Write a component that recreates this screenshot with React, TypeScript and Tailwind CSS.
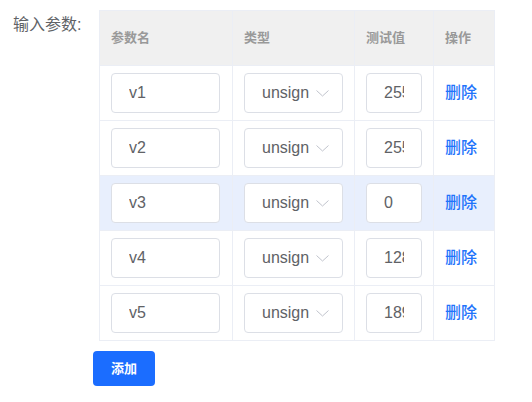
import React from "react";

const rows = [
  { name: "v1", value: "255" },
  { name: "v2", value: "255" },
  { name: "v3", value: "0", active: true },
  { name: "v4", value: "128" },
  { name: "v5", value: "189" },
];

function Chevron() {
  return (
    <svg width="13" height="7" viewBox="0 0 13 7" className="shrink-0">
      <polyline points="0.5,0.5 6.5,6 12.5,0.5" fill="none" stroke="#c0c4cc" strokeWidth="1" />
    </svg>
  );
}

export default function App() {
  const font = { fontFamily: '"Liberation Sans", Arial, "Noto Sans CJK SC", sans-serif' };
  return (
    <div className="w-[532px] h-[402px] bg-white pt-[10px]" style={font}>
      <div className="flex">
        <div className="w-[99px] pl-[13px] mt-[3px] text-[16px] leading-6 text-[#606266]">输入参数:</div>
        <div className="border-l border-t border-[#ebeef5] w-[396px]">
          <div className="grid grid-cols-[133px_122px_79px_61px] bg-[#f0f0f0] h-[55px]">
            <div className="border-r border-b border-[#ebeef5] pl-[11px] flex items-center text-[13px] font-bold text-[#999]">参数名</div>
            <div className="border-r border-b border-[#ebeef5] pl-[11px] flex items-center text-[13px] font-bold text-[#999]">类型</div>
            <div className="border-r border-b border-[#ebeef5] pl-[11px] flex items-center text-[13px] font-bold text-[#999]">测试值</div>
            <div className="border-r border-b border-[#ebeef5] pl-[11px] flex items-center text-[13px] font-bold text-[#999]">操作</div>
          </div>
          {rows.map((r) => (
            <div
              key={r.name}
              className={`grid grid-cols-[133px_122px_79px_61px] h-[55px] ${r.active ? "bg-[#e8effd]" : "bg-white"}`}
            >
              <div className="border-r border-b border-[#ebeef5] pl-[11px] pr-[12px] flex items-center">
                <input
                  readOnly
                  value={r.name}
                  className="w-full h-[40px] border border-[#dcdfe6] rounded-[4px] bg-white px-[17px] text-[16px] text-[#606266] outline-none"
                  style={font}
                />
              </div>
              <div className="border-r border-b border-[#ebeef5] px-[11px] flex items-center">
                <div className="w-full h-[40px] border border-[#dcdfe6] rounded-[4px] bg-white pl-[17px] pr-[13px] flex items-center justify-between">
                  <span className="whitespace-nowrap text-[16px] text-[#606266]">unsign</span>
                  <Chevron />
                </div>
              </div>
              <div className="border-r border-b border-[#ebeef5] px-[11px] flex items-center">
                <input
                  readOnly
                  value={r.value}
                  className="w-full min-w-0 h-[40px] border border-[#dcdfe6] rounded-[4px] bg-white px-[17px] text-[16px] text-[#606266] outline-none"
                  style={font}
                />
              </div>
              <div className="border-r border-b border-[#ebeef5] pl-[11px] flex items-center">
                <span className="text-[16px] font-medium text-[#1f74fb] cursor-pointer">删除</span>
              </div>
            </div>
          ))}
        </div>
      </div>
      <div className="ml-[93px] mt-[10px]">
        <button className="w-[62px] h-[35px] rounded-[4px] bg-[#1b6dff] text-white text-[13px] font-bold">添加</button>
      </div>
    </div>
  );
}
